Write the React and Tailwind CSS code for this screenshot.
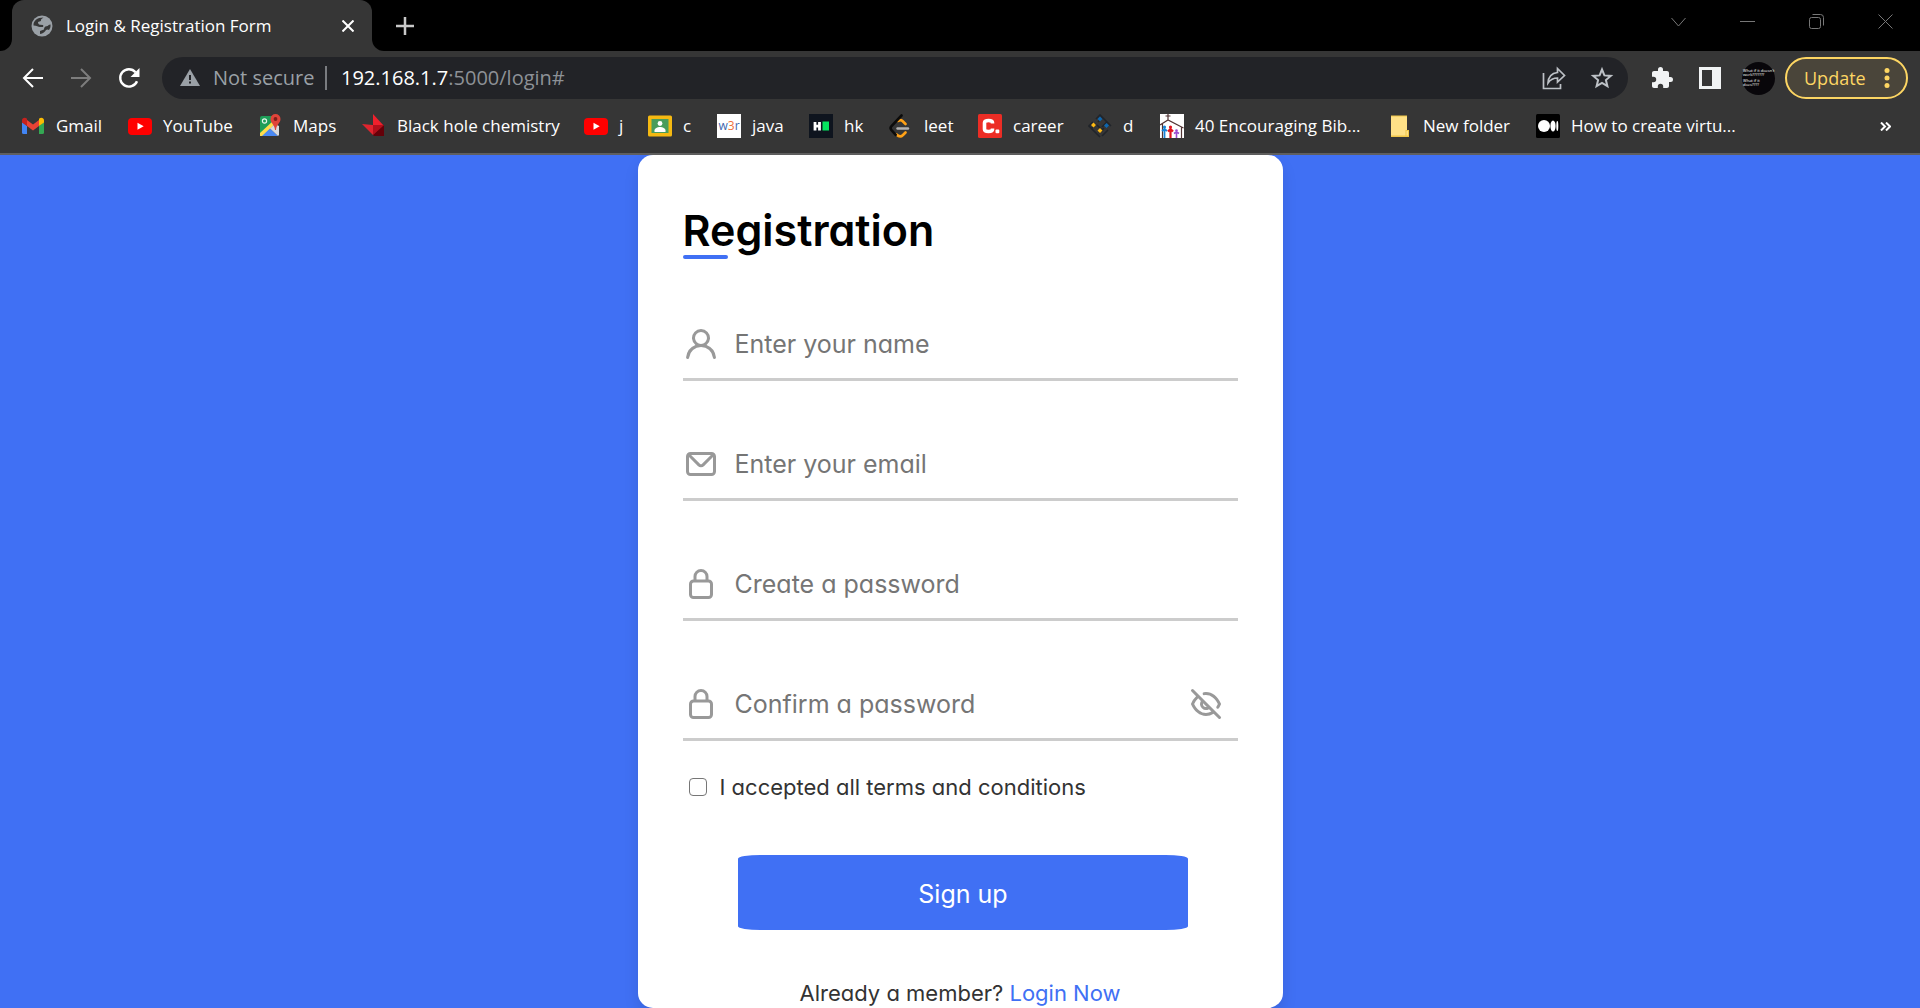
import React from "react";

const iconClass = "h-6 w-6 shrink-0";

function GmailIcon() {
  return (
    <svg viewBox="0 0 24 24" className={iconClass} aria-hidden="true">
      <path fill="#4285f4" d="M1 8l5 4v8H2.500Q1 20 1 18.500z" />
      <path fill="#34a853" d="M23 8l-5 4v8h3.500q1.500 0 1.500-1.500z" />
      <path fill="#ea4335" d="M6 6l6 4.500L18 6v6l-6 4.500L6 12z" />
      <path fill="#c5221f" d="M1 6.500C1 3.800 4 3 6 4.800V12L1 8.500z" />
      <path fill="#fbbc04" d="M23 6.500C23 3.800 20 3 18 4.800V12l5-3.500z" />
    </svg>
  );
}

function YouTubeIcon() {
  return (
    <svg viewBox="0 0 24 24" className={iconClass} aria-hidden="true">
      <rect x="0" y="4" width="24" height="17" rx="4" fill="#f00" />
      <path fill="#fff" d="M9.500 8.800v7l6.200-3.500z" />
    </svg>
  );
}

function MapsIcon() {
  return (
    <svg viewBox="0 0 24 24" className={iconClass} aria-hidden="true">
      <path fill="#1e9e58" d="M2 4q0-2 2-2h11v8L2 22z" />
      <path fill="#ffdd4b" d="M2 19L15 7l2 3L5 22H2z" />
      <path fill="#4a89f3" d="M4 22l8-7.500L20 22z" />
      <path fill="#d8dade" d="M12 14.500L17 10l4 2v9l-1 1z" />
      <circle cx="6.500" cy="7" r="2.100" fill="none" stroke="#e5f5ec" strokeWidth="1.200" />
      <path fill="#e0443a" d="M17.500 0a5 5 0 0 1 5 5c0 4-4.200 5.500-4.500 11h-1c-.3-5.500-4.500-7-4.500-11a5 5 0 0 1 5-5z" />
      <circle cx="17.500" cy="5" r="1.900" fill="#7d1e1a" />
    </svg>
  );
}

function RedShardIcon() {
  return (
    <svg viewBox="0 0 24 24" className={iconClass} aria-hidden="true">
      <path fill="#f0202c" d="M11 0l11 12H11z" />
      <path fill="#e0242e" d="M0 10l11 1v10z" />
      <path fill="#8a0a14" d="M11 11h11v11H12z" />
      <path fill="#650009" d="M11 21l11-10v11H12z" />
      <path fill="#b30f1b" d="M11 11h11L11 21z" />
    </svg>
  );
}

function ClassroomIcon() {
  return (
    <svg viewBox="0 0 24 24" className={iconClass} aria-hidden="true">
      <rect x="0" y="1.500" width="24" height="21" rx="1.500" fill="#f5b912" />
      <rect x="3.500" y="5" width="17" height="14" fill="#4a9c5c" />
      <circle cx="12" cy="9.500" r="2.400" fill="#fff" />
      <path fill="#fff" d="M6.500 16.500c0-2.300 3-3.500 5.500-3.500s5.500 1.200 5.500 3.500V18h-11z" />
    </svg>
  );
}

function W3rIcon() {
  return (
    <span className="flex h-6 w-6 shrink-0 items-center justify-center bg-white font-['Open_Sans',sans-serif] text-xs leading-none text-[#3f68ad]">
      w<span className="text-[#f0703c]">3</span>r
    </span>
  );
}

function HackerRankIcon() {
  return (
    <svg viewBox="0 0 24 24" className={iconClass} aria-hidden="true">
      <rect width="24" height="24" fill="#0e141e" />
      <path d="M6 8v8.500M10.500 8v8.500M6 12.200h4.500" stroke="#fff" strokeWidth="2.800" />
      <rect x="13.500" y="7.500" width="6.500" height="9" fill="#05e65f" />
    </svg>
  );
}

function LeetIcon() {
  return (
    <svg viewBox="0 0 24 24" className={iconClass} fill="none" strokeLinecap="round" aria-hidden="true">
      <path d="M9 7q2.500-1.800 4.500 0l3 3M7.500 20.500q3.500 3.500 6.500.5l2.500-2.500" stroke="#ffa116" strokeWidth="2.600" />
      <path d="M12.500 1.500L2.300 12.300q-1.500 1.700 0 3.500l4.400 5" stroke="#0b0b0b" strokeWidth="2.600" />
      <path d="M8.500 14.500h10.500" stroke="#b3b3b3" strokeWidth="2.400" />
    </svg>
  );
}

function CareerIcon() {
  return (
    <svg viewBox="0 0 24 24" className={iconClass} fill="none" aria-hidden="true">
      <rect width="24" height="24" rx="1.500" fill="#ec2d25" />
      <path d="M14.500 9.500V8.700Q14.500 6.500 10.500 6.500T6.500 8.700v6.600q0 2.200 4 2.200t4-2.200v-.8" stroke="#fff" strokeWidth="3.600" />
      <rect x="17.500" y="15.500" width="3.800" height="3.800" rx="1" fill="#fff" />
    </svg>
  );
}

function DiamondsIcon() {
  return (
    <svg viewBox="0 0 24 24" className={iconClass} fill="none" aria-hidden="true">
      <path d="M8 5l4-4 11 11M5 8l-4 4 11 11M3 15l5-5M10 8l5-5M19 8l-5 5M16 14l-5 5M20 16l-6 6M9 11l6 6" stroke="#20242a" strokeWidth="1.600" />
      <path fill="#0d66ae" d="M12 2.500l2.500 2.500L12 7.500 9.500 5zM18.500 9l2.500 2.500-2.500 2.500-2.500-2.500z" />
      <path fill="#fdb913" d="M5.500 8.500L8 11l-2.500 2.500L3 11zM12 14l2.500 2.500L12 19l-2.500-2.500z" />
    </svg>
  );
}

function ChurchIcon() {
  return (
    <svg viewBox="0 0 24 24" className={iconClass} fill="none" aria-hidden="true">
      <rect width="24" height="24" fill="#fff" />
      <path d="M8 0v6M5.500 2h5M0 11l8-5 15.500 8M2.500 10v14M21.500 13v11" stroke="#523434" strokeWidth="1.200" />
      <path d="M4.500 15v9M2 17l2.500-2L7 17" stroke="#1784d8" strokeWidth="1.800" />
      <path d="M10.500 15v9M8 17.500l2.500-2.500 2.500 2.500" stroke="#e0141e" strokeWidth="2.200" />
      <path d="M16.500 18v6M14 19.500l2.500-1.500 2.500 1.500" stroke="#9a4bd0" strokeWidth="1.600" />
      <circle cx="4.500" cy="13" r="1.600" fill="#1784d8" />
      <circle cx="10.500" cy="13" r="1.600" fill="#e0141e" />
      <circle cx="16.500" cy="16.500" r="1.300" fill="#9a4bd0" />
    </svg>
  );
}

function FolderIcon() {
  return (
    <svg viewBox="0 0 24 24" className={iconClass} aria-hidden="true">
      <path fill="#ffe187" d="M3 2h16v14l2 1v6H3z" />
      <path fill="#f0c648" d="M3 1.500h16v1H3zM3 21.500h18V23H3zM17.500 16H21v6h-3.500z" />
      <path fill="#ffe187" d="M18.500 17h1.500v4.500h-1.500z" />
    </svg>
  );
}

function MediumIcon() {
  return (
    <svg viewBox="0 0 24 24" className={iconClass} aria-hidden="true">
      <rect width="24" height="24" rx="1.500" fill="#000" />
      <circle cx="8" cy="12" r="6" fill="#fff" />
      <ellipse cx="17" cy="12" rx="2.600" ry="5.600" fill="#fff" />
      <ellipse cx="21.300" cy="12" rx="1" ry="5" fill="#fff" />
    </svg>
  );
}

const bookmarks = [
  { label: "Gmail", Icon: GmailIcon, width: "w-[107px]" },
  { label: "YouTube", Icon: YouTubeIcon, width: "w-[130px]" },
  { label: "Maps", Icon: MapsIcon, width: "w-[104px]" },
  { label: "Black hole chemistry", Icon: RedShardIcon, width: "w-[222px]" },
  { label: "j", Icon: YouTubeIcon, width: "w-16" },
  { label: "c", Icon: ClassroomIcon, width: "w-[69px]" },
  { label: "java", Icon: W3rIcon, width: "w-[92px]" },
  { label: "hk", Icon: HackerRankIcon, width: "w-20" },
  { label: "leet", Icon: LeetIcon, width: "w-[89px]" },
  { label: "career", Icon: CareerIcon, width: "w-[110px]" },
  { label: "d", Icon: DiamondsIcon, width: "w-[72px]" },
  { label: "40 Encouraging Bib...", Icon: ChurchIcon, width: "w-[228px]" },
  { label: "New folder", Icon: FolderIcon, width: "w-[148px]" },
  { label: "How to create virtu...", Icon: MediumIcon, width: "w-[230px]" },
];

function TabStrip() {
  return (
    <div className="flex h-[51px] bg-black">
      <div className="flex w-3 items-end bg-[#363636]">
        <div className="h-full w-3 rounded-br-xl bg-black" />
      </div>
      <div className="flex w-[360px] items-center rounded-t-xl bg-[#363636] pr-3 pl-[19px]">
        <svg viewBox="0 0 22 22" className="h-[22px] w-[22px] shrink-0" aria-hidden="true">
          <circle cx="11" cy="11" r="10.500" fill="#9aa0a6" />
          <path fill="#363636" d="M12.500 2.500c-2 1.500-3 1.800-2.500 3.500l-3 1c0 1.500.5 2.500 2 2.700l3 .3c.5.500.3 1.500 0 2H9c-2 0-3-1.500-6.500-1.500C2.300 6 6 2.500 12.500 2.500z" />
          <path fill="#363636" d="M19.500 9.500c.3 2.500-.5 4-1.500 5.500-1-.8-2.200-.6-3 0-.8 1.500-3 4-6 4v-3l4-1.500c0-2 .8-3 2.500-3.300 1.800 0 2-1.700 4-1.700z" />
        </svg>
        <span className="ml-[13px] flex-1 whitespace-nowrap text-[17px] text-white">Login &amp; Registration Form</span>
        <button aria-label="Close tab" className="flex h-6 w-6 items-center justify-center">
          <svg viewBox="0 0 12 12" className="h-3 w-3" stroke="#fff" strokeWidth="2">
            <path d="M.5.5l11 11M11.500.5l-11 11" />
          </svg>
        </button>
      </div>
      <div className="w-3 bg-[#363636]">
        <div className="h-full w-3 rounded-bl-xl bg-black" />
      </div>
      <button aria-label="New tab" className="ml-2 flex w-[26px] items-center justify-center">
        <svg viewBox="0 0 18 18" className="h-[18px] w-[18px]" stroke="#c8c8c8" strokeWidth="2.500">
          <path d="M9 0v18M0 9h18" />
        </svg>
      </button>
      <div className="flex-1" />
      <div className="flex h-[43px] items-center gap-[53px] pr-[26px]">
        {[
          ["Search tabs", "M.5 4l7 8 7-8"],
          ["Minimize", "M0 7.500h15"],
          ["Restore", "M3.500 .5h8q3 0 3 3v8M2.500 3.500h7q2 0 2 2v7q0 2-2 2h-7q-2 0-2-2v-7q0-2 2-2z"],
          ["Close window", "M.5 .5l14 14M14.500 .5l-14 14"],
        ].map(([label, d]) => (
          <button key={label} aria-label={label} className="h-4 w-4">
            <svg viewBox="0 0 16 16" className="h-4 w-4" fill="none" stroke="#777" strokeWidth="1">
              <path d={d} />
            </svg>
          </button>
        ))}
      </div>
    </div>
  );
}

function Toolbar() {
  return (
    <div className="flex h-[54px] items-center pr-3 pl-[22px]">
      <button aria-label="Back">
        <svg viewBox="0 0 22 22" className="h-[22px] w-[22px]" fill="none" stroke="#fff" strokeWidth="2">
          <path d="M21 11H2.500M11 2l-9 9 9 9" />
        </svg>
      </button>
      <button aria-label="Forward" className="ml-[26px]">
        <svg viewBox="0 0 22 22" className="h-[22px] w-[22px]" fill="none" stroke="#7d7d7d" strokeWidth="2">
          <path d="M1 11h18.500M11 2l9 9-9 9" />
        </svg>
      </button>
      <button aria-label="Reload" className="ml-[26px]">
        <svg viewBox="0 0 22 22" className="h-[22px] w-[22px]" fill="none" stroke="#fff" strokeWidth="2.400">
          <path d="M19 14.200A8.700 8.700 0 1 1 17.500 5.200" />
          <path fill="#fff" stroke="none" d="M21.500 1v9h-9z" />
        </svg>
      </button>
      <div className="ml-[22px] flex h-[42px] flex-1 items-center rounded-full bg-[#222327] pr-[14px] pl-[18px]">
        <svg viewBox="0 0 20 18" className="h-[18px] w-5 shrink-0" aria-hidden="true">
          <path fill="#9aa0a6" d="M10 0l10 17H0z" />
          <path fill="#222327" d="M9 6h2v5H9zM9 12.500h2v2H9z" />
        </svg>
        <span className="ml-[13px] w-[102px] whitespace-nowrap text-xl text-[#9aa0a6]">Not secure</span>
        <span className="mr-[14px] ml-[10px] h-6 w-0.5 bg-[#7a7c80]" />
        <div className="relative h-[42px] flex-1">
          <input aria-label="Address" className="h-full w-full bg-transparent text-xl text-transparent outline-none" />
          <div className="pointer-events-none absolute inset-0 flex items-center text-xl text-[#8d9196]">
            <span className="text-white">192.168.1.7</span>:5000/login#
          </div>
        </div>
        <button aria-label="Share">
          <svg viewBox="0 0 24 24" className="h-6 w-6" fill="none" stroke="#bdc1c6" strokeWidth="1.700">
            <path d="M1.500 7v15.500h17V18" />
            <path d="M15.500 2.500l7 7-7 6.500v-4q-6 0-9.500 5 .5-9.500 9.500-10.500z" />
          </svg>
        </button>
        <button aria-label="Bookmark this tab" className="ml-6">
          <svg viewBox="0 0 24 24" className="h-6 w-6" fill="none" stroke="#bdc1c6" strokeWidth="2">
            <path d="M12 3.500l2.400 5.900 6.400.5-4.900 4.100 1.500 6.200L12 16.900l-5.400 3.300 1.500-6.200-4.900-4.100 6.400-.5z" />
          </svg>
        </button>
      </div>
      <button aria-label="Extensions" className="ml-[22px]">
        <svg viewBox="0 0 24 24" className="h-6 w-6" fill="#f1f3f4">
          <path d="M20.500 11H19V7c0-1.100-.9-2-2-2h-4V3.500a2.500 2.500 0 0 0-5 0V5H4c-1.100 0-2 .9-2 2v3.800h1.500a2.700 2.700 0 0 1 0 5.400H2V20c0 1.100.9 2 2 2h3.800v-1.500a2.700 2.700 0 0 1 5.400 0V22H17c1.100 0 2-.9 2-2v-4h1.500a2.500 2.500 0 0 0 0-5z" />
        </svg>
      </button>
      <button aria-label="Side panel" className="ml-6">
        <svg viewBox="0 0 24 24" className="h-6 w-6">
          <path fill="#f1f3f4" fillRule="evenodd" d="M1 1h22v22H1zM4 4v16h10V4z" />
        </svg>
      </button>
      <button aria-label="Profile" className="ml-5 flex h-[33px] w-[33px] shrink-0 flex-col justify-center rounded-full bg-[#08060a] pl-px text-left text-[4px] leading-[4px] whitespace-nowrap text-white">
        <span>What if it doesn't</span>
        <span>work???????</span>
        <span className="mt-0.5">What if it</span>
        <span>does????</span>
      </button>
      <button className="ml-[10px] flex h-[42px] w-[123px] items-center justify-between rounded-full border-2 border-[#fdd663] bg-[#4a453a] pr-4 pl-[17px] text-lg text-[#fdd663]">
        Update
        <svg viewBox="0 0 6 22" className="h-[22px] w-1.5" fill="#fdd663" aria-hidden="true">
          <circle cx="3" cy="3.500" r="2.500" />
          <circle cx="3" cy="11" r="2.500" />
          <circle cx="3" cy="18.500" r="2.500" />
        </svg>
      </button>
    </div>
  );
}

function BookmarksBar() {
  return (
    <nav className="flex h-[42px] items-center pr-[29px] pl-[21px]">
      {bookmarks.map(({ label, Icon, width }, i) => (
        <a key={i} href="#" className={`flex shrink-0 items-center gap-[11px] whitespace-nowrap text-[17px] text-white ${width}`}>
          <Icon />
          {label}
        </a>
      ))}
      <button aria-label="More bookmarks" className="ml-auto">
        <svg viewBox="0 0 11 9" className="h-[9px] w-[11px]" fill="none" stroke="#fff" strokeWidth="2">
          <path d="M1 .5l4 4-4 4M6 .5l4 4-4 4" />
        </svg>
      </button>
    </nav>
  );
}

const paths = {
  user: "M15.71,12.71a6,6,0,1,0-7.42,0,10,10,0,0,0-6.22,8.18,1,1,0,0,0,2,.22,8,8,0,0,1,15.9,0,1,1,0,0,0,1,.89h.11a1,1,0,0,0,.88-1.1A10,10,0,0,0,15.71,12.71ZM12,12a4,4,0,1,1,4-4A4,4,0,0,1,12,12Z",
  envelope: "M19,4H5A3,3,0,0,0,2,7V17a3,3,0,0,0,3,3H19a3,3,0,0,0,3-3V7A3,3,0,0,0,19,4Zm-.41,2-5.88,5.88a1,1,0,0,1-1.42,0L5.41,6ZM20,17a1,1,0,0,1-1,1H5a1,1,0,0,1-1-1V7.41l5.88,5.88a3,3,0,0,0,4.24,0L20,7.41Z",
  lock: "M17,9V7A5,5,0,0,0,7,7V9a3,3,0,0,0-3,3v7a3,3,0,0,0,3,3H17a3,3,0,0,0,3-3V12A3,3,0,0,0,17,9ZM9,7a3,3,0,0,1,6,0V9H9Zm9,12a1,1,0,0,1-1,1H7a1,1,0,0,1-1-1V12a1,1,0,0,1,1-1H17a1,1,0,0,1,1,1Z",
  eyeSlash: "M10.94,6.08A6.93,6.93,0,0,1,12,6c3.18,0,6.17,2.29,7.91,6a15.23,15.23,0,0,1-.9,1.64,1,1,0,0,0-.16.55,1,1,0,0,0,1.86.5,15.77,15.77,0,0,0,1.21-2.3,1,1,0,0,0,0-.79C19.9,6.91,16.1,4,12,4a7.77,7.77,0,0,0-1.4.12,1,1,0,1,0,.34,2ZM3.71,2.29A1,1,0,0,0,2.29,3.71L5.39,6.8a14.62,14.62,0,0,0-3.31,4.8,1,1,0,0,0,0,.8C4.1,17.09,7.9,20,12,20a9.26,9.26,0,0,0,5.05-1.54l3.24,3.25a1,1,0,0,0,1.42,0,1,1,0,0,0,0-1.42Zm6.36,9.19,2.45,2.45A1.81,1.81,0,0,1,12,14a2,2,0,0,1-2-2A1.81,1.81,0,0,1,10.07,11.48ZM12,18c-3.18,0-6.17-2.29-7.9-6A12.09,12.09,0,0,1,6.8,8.21L8.57,10A4,4,0,0,0,14,15.43L15.59,17A7.24,7.24,0,0,1,12,18Z",
};

function FieldIcon({ name }) {
  return (
    <svg viewBox="0 0 24 24" className="h-9 w-9 shrink-0" fill="#999" aria-hidden="true">
      <path d={paths[name]} />
    </svg>
  );
}

function Field({ type, icon, placeholder, children }) {
  return (
    <div className="flex h-[75px] items-center border-b-[3px] border-[#ccc] pt-[3px]">
      <FieldIcon name={icon} />
      <input
        type={type}
        aria-label={placeholder}
        placeholder={placeholder}
        className="ml-4 h-full min-w-0 flex-1 bg-transparent text-[25px] outline-none placeholder:text-[#757575]"
      />
      {children}
    </div>
  );
}

function RegistrationForm() {
  return (
    <form className="w-full max-w-[645px] rounded-[15px] bg-white px-[45px] pt-[50px] font-['Inter','Open_Sans',sans-serif] text-[#333] shadow-[0_8px_15px_rgba(0,0,0,0.1)] [font-feature-settings:'cv11']">
      <h1 className="text-[43px] leading-[50px] font-semibold text-black">Registration</h1>
      <div className="h-1 w-[45px] rounded-full bg-[#4070f4]" />
      <div className="mt-[47px] flex flex-col gap-[45px]">
        <Field type="text" icon="user" placeholder="Enter your name" />
        <Field type="email" icon="envelope" placeholder="Enter your email" />
        <Field type="password" icon="lock" placeholder="Create a password" />
        <Field type="password" icon="lock" placeholder="Confirm a password">
          <button type="button" aria-label="Show password" className="mr-[14px]">
            <FieldIcon name="eyeSlash" />
          </button>
        </Field>
      </div>
      <div className="mt-7 flex h-9 items-center pl-1.5">
        <input id="terms" type="checkbox" className="h-[18px] w-[18px] appearance-none rounded-[4px] border border-[#767676] bg-white" />
        <label htmlFor="terms" className="ml-[13px] text-[22px]">I accepted all terms and conditions</label>
      </div>
      <div className="mt-[50px] flex justify-center pl-1.5">
        <button type="button" className="h-[75px] w-[450px] rounded-[5%] bg-[#4070f4] pt-1 text-[25px] text-white">
          Sign up
        </button>
      </div>
      <p className="mt-12 text-center text-[22px] leading-[30px] whitespace-nowrap">
        Already a member? <a href="#" className="text-[#4070f4]">Login Now</a>
      </p>
    </form>
  );
}

export default function App() {
  return (
    <div className="flex min-h-screen flex-col bg-[#4070f4] font-['Open_Sans','Noto_Sans',sans-serif]">
      <header className="shrink-0 border-b-2 border-[#5f5f5f] bg-[#363636] pb-1.5">
        <TabStrip />
        <Toolbar />
        <BookmarksBar />
      </header>
      <main className="flex flex-1 items-start justify-center">
        <RegistrationForm />
      </main>
    </div>
  );
}
